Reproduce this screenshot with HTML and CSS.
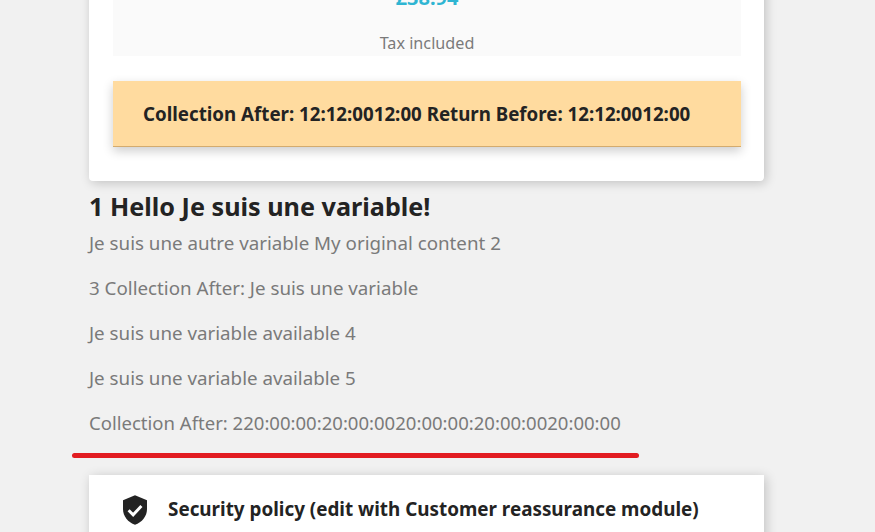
FILE: index.html
```html
<!DOCTYPE html>
<html lang="en">
<head>
    <meta charset="utf-8"/>
    <title>Product</title>
    <link rel="stylesheet" href="styles.css">
</head>
<body>
    <div class="page">
        <section class="card product-card">
            <div class="price-box">
                <div class="price">£38.94</div>
                <div class="tax">Tax included</div>
            </div>
            <div class="alert">Collection After: 12:12:0012:00 Return Before: 12:12:0012:00</div>
        </section>
        <section class="variables">
            <h2>1 Hello Je suis une variable!</h2>
            <p>Je suis une autre variable My original content 2</p>
            <p>3 Collection After: Je suis une variable</p>
            <p>Je suis une variable available 4</p>
            <p>Je suis une variable available 5</p>
            <p class="times">Collection After: 220:00:00:20:00:0020:00:00:20:00:0020:00:00</p>
        </section>
        <hr class="red-line">
        <section class="card reassurance">
            <svg class="shield" viewBox="0 0 24 24" width="32" height="32">
                <path fill="#232323" d="M12 1 3 4.6v6.6c0 5.4 3.8 10.1 9 11.8 5.2-1.7 9-6.4 9-11.8V4.6z"/>
                <path fill="none" stroke="#fff" stroke-width="2.2" d="m7.2 12.2 3.4 3.4 6.2-6.6"/>
            </svg>
            <span class="reassurance-text">Security policy (edit with Customer reassurance module)</span>
        </section>
    </div>
</body>
</html>
```
FILE: styles.css
```css
* {
    box-sizing: border-box;
}
html, body {
    margin: 0;
    padding: 0;
    height: 100%;
    overflow: hidden;
    background-color: #f1f1f1;
    font-family: 'Noto Sans', sans-serif;
    color: #7a7a7a;
}
.page {
    width: 675px;
    margin-left: 89px;
    margin-top: -40px; /* page is scrolled down a little */
}
.card {
    background-color: white;
    border-radius: 4px;
    box-shadow: 2px 2px 11px rgba(0, 0, 0, 0.2);
}
.product-card {
    padding: 0 23px 34px 24px;
}
.price-box {
    height: 96px;
    background-color: #fafafa;
    text-align: center;
    padding-top: 23px;
}
.price {
    color: #2fb5d2;
    font-size: 20px;
    font-weight: 700;
    line-height: 30px;
}
.tax {
    margin-top: 19px;
    font-size: 16.2px;
    line-height: 22px;
}
.alert {
    margin-top: 25px;
    height: 66px;
    padding: 0 30px 1px;
    display: flex;
    align-items: center;
    background-color: #ffdb9f;
    border-bottom: 1px solid #d3ab6f;
    box-shadow: 0 4px 10px rgba(0, 0, 0, 0.2);
    color: #232323;
    font-size: 18.72px;
    font-weight: 700;
}
.variables h2 {
    margin: 11px 0 0;
    color: #232323;
    font-size: 25.2px;
    font-weight: 700;
    line-height: 28px;
}
.variables p {
    margin: 0;
    font-size: 18.75px;
    line-height: 45px;
}
.variables .times {
    font-size: 18.55px;
}
.red-line {
    width: 567px;
    height: 5px;
    margin: 8px 0 17px -17px;
    border: none;
    border-radius: 3px;
    background-color: #e21c21;
}
.reassurance {
    display: flex;
    align-items: flex-start;
    gap: 17px;
    height: 100px;
    padding: 19px 0 0 30px;
    border-radius: 0;
}
.shield {
    flex-shrink: 0;
}
.reassurance-text {
    color: #232323;
    font-size: 18.85px;
    font-weight: 700;
    line-height: 30px;
}
```
